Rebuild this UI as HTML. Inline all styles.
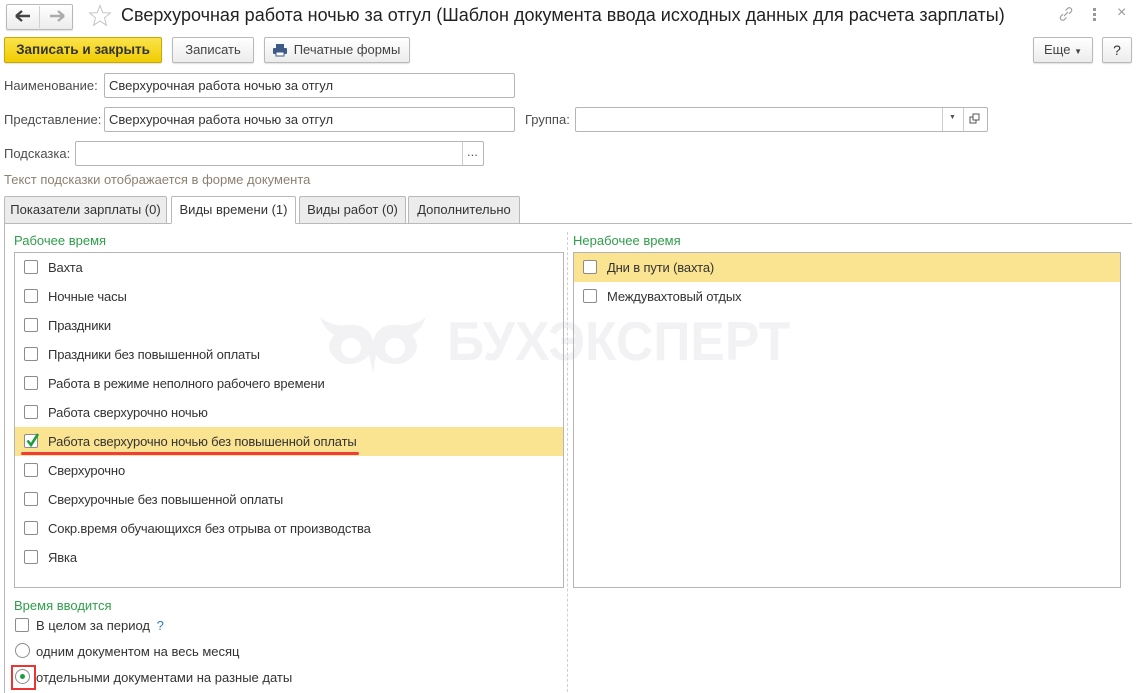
<!DOCTYPE html>
<html><head><meta charset="utf-8"><style>
*{box-sizing:border-box;margin:0;padding:0}
body{width:1136px;height:691px;background:#fff;font-family:"Liberation Sans",Arial,sans-serif;font-size:13px;color:#333;position:relative;overflow:hidden}
.a{position:absolute;white-space:nowrap}
.btn{position:absolute;border:1px solid #b9b9b9;border-radius:2px;background:linear-gradient(#fff,#ececec);box-shadow:0 1px 1px rgba(0,0,0,.12);text-align:center;line-height:24px;color:#444}
.inp{position:absolute;border:1px solid #b5b5b5;border-radius:2px;background:#fff;height:25px;line-height:23px;padding-left:4px;color:#333}
.lbl{position:absolute;color:#4d4d4d;white-space:nowrap}
.tab{position:absolute;top:196px;height:28px;border:1px solid #b9b9b9;background:#ececec;line-height:26px;text-align:center;color:#333;border-radius:2px 2px 0 0}
.green{color:#2e9e4a}
.cb{position:absolute;width:14px;height:14px;border:1px solid #8c8c8c;border-radius:2px;background:#fff}
.row{position:absolute;height:29px;line-height:30px}
.row .cb{left:9px;top:7px}
.row span{position:absolute;left:33px;color:#333;letter-spacing:-0.15px}
</style></head><body>
<div class="btn" style="left:6px;top:4px;width:67px;height:26px;"></div>
<div class="a" style="left:39px;top:6px;width:1px;height:22px;background:#d0d0d0"></div>
<svg class="a" style="left:14px;top:9px" width="18" height="14"><path d="M2 7H16M2 7L8 2M2 7L8 12" stroke="#444" stroke-width="2.4" fill="none"/></svg>
<svg class="a" style="left:48px;top:9px" width="18" height="14"><path d="M2 7H16M16 7L10 2M16 7L10 12" stroke="#aaa" stroke-width="2.4" fill="none"/></svg>
<svg class="a" style="left:88px;top:4px" width="24" height="23"><path d="M12 1.5L14.8 8.6 22.3 9 16.5 13.8 18.4 21.2 12 17 5.6 21.2 7.5 13.8 1.7 9 9.2 8.6Z" fill="none" stroke="#c4c4c4" stroke-width="1"/></svg>
<div class="a" style="left:121px;top:5px;font-size:18px;color:#222">Сверхурочная работа ночью за отгул (Шаблон документа ввода исходных данных для расчета зарплаты)</div>
<svg class="a" style="left:1058px;top:6px" width="16" height="16"><path d="M6 10L10 6M7.5 4.5l2-2a2.3 2.3 0 0 1 3.6 3.3l-2 2M8.5 11.5l-2 2a2.3 2.3 0 0 1-3.6-3.3l2-2" stroke="#999" stroke-width="1.1" fill="none"/></svg>
<div class="a" style="left:1093px;top:8px;width:3px;height:3px;background:#999;box-shadow:0 5px 0 #999,0 10px 0 #999"></div>
<div class="a" style="left:1117px;top:4px;color:#999;font-size:16px">×</div>
<div class="btn" style="left:4px;top:37px;width:158px;height:26px;background:linear-gradient(#fbe34c,#f0cc00);border-color:#c9a800;color:#333;font-weight:bold;font-size:13.5px">Записать и закрыть</div>
<div class="btn" style="left:172px;top:37px;width:82px;height:26px">Записать</div>
<div class="btn" style="left:264px;top:37px;width:146px;height:26px;padding-left:20px">Печатные формы</div>
<svg class="a" style="left:272px;top:43px" width="16" height="14"><rect x="4" y="1" width="8" height="4" fill="#3d5b87"/><rect x="1" y="5" width="14" height="6" rx="1" fill="#3d5b87"/><rect x="4" y="9" width="8" height="4" fill="#fff" stroke="#3d5b87"/></svg>
<div class="btn" style="left:1033px;top:37px;width:60px;height:26px">Еще <span style="font-size:8px">▼</span></div>
<div class="btn" style="left:1102px;top:37px;width:30px;height:26px;font-size:14px;color:#333">?</div>
<div class="lbl" style="left:4px;top:78px">Наименование:</div>
<div class="inp" style="left:104px;top:73px;width:411px">Сверхурочная работа ночью за отгул</div>
<div class="lbl" style="left:4px;top:112px">Представление:</div>
<div class="inp" style="left:104px;top:107px;width:411px">Сверхурочная работа ночью за отгул</div>
<div class="lbl" style="left:525px;top:112px">Группа:</div>
<div class="inp" style="left:575px;top:107px;width:413px"></div>
<div class="a" style="left:942px;top:108px;width:1px;height:23px;background:#ccc"></div>
<div class="a" style="left:963px;top:108px;width:1px;height:23px;background:#ccc"></div>
<div class="a" style="left:949px;top:114px;font-size:7px;color:#555">▼</div>
<svg class="a" style="left:969px;top:113px" width="12" height="12"><rect x="1" y="4" width="6" height="6" fill="none" stroke="#555"/><rect x="4" y="1" width="6" height="6" fill="#fff" stroke="#555"/></svg>
<div class="lbl" style="left:4px;top:146px">Подсказка:</div>
<div class="inp" style="left:75px;top:141px;width:409px"></div>
<div class="a" style="left:462px;top:142px;width:1px;height:23px;background:#ccc"></div>
<div class="a" style="left:467px;top:144px;color:#555">...</div>
<div class="a" style="left:4px;top:172px;color:#8d8071">Текст подсказки отображается в форме документа</div>
<div class="tab" style="left:4px;width:163px">Показатели зарплаты (0)</div>
<div class="tab" style="left:171px;width:125px;background:#fff;border-bottom-color:#fff;z-index:2">Виды времени (1)</div>
<div class="tab" style="left:299px;width:107px">Виды работ (0)</div>
<div class="tab" style="left:408px;width:112px">Дополнительно</div>
<div class="a" style="left:4px;top:223px;width:1128px;height:470px;border-left:1px solid #b9b9b9;border-top:1px solid #b9b9b9"></div>
<!-- watermark -->
<svg class="a" style="left:318px;top:315px" width="112" height="58"><path d="M2 2Q14 12 30 10Q50 8 55 26Q60 8 80 10Q96 12 108 2Q104 14 94 20Q104 32 94 42Q84 52 70 48Q62 46 58 40L55 58L51 40Q46 46 38 48Q24 52 16 42Q6 32 16 20Q6 14 2 2Z" fill="#f2f2f4"/><circle cx="33" cy="33" r="10" fill="#fff"/><circle cx="77" cy="33" r="10" fill="#fff"/></svg>
<div class="a" style="left:447px;top:309px;font-size:55px;font-weight:bold;color:#f2f2f4;transform:scaleX(0.94);transform-origin:0 0">БУХЭКСПЕРТ</div>
<div class="a green" style="left:14px;top:233px">Рабочее время</div>
<div class="a" style="left:567px;top:232px;height:460px;border-left:1px dashed #d0d0d0"></div>
<div class="a" style="left:14px;top:252px;width:550px;height:336px;border:1px solid #b5b5b5">
<div class="row" style="left:0;top:0;width:548px"><div class="cb"></div><span>Вахта</span></div>
<div class="row" style="left:0;top:29px;width:548px"><div class="cb"></div><span>Ночные часы</span></div>
<div class="row" style="left:0;top:58px;width:548px"><div class="cb"></div><span>Праздники</span></div>
<div class="row" style="left:0;top:87px;width:548px"><div class="cb"></div><span>Праздники без повышенной оплаты</span></div>
<div class="row" style="left:0;top:116px;width:548px"><div class="cb"></div><span>Работа в режиме неполного рабочего времени</span></div>
<div class="row" style="left:0;top:145px;width:548px"><div class="cb"></div><span>Работа сверхурочно ночью</span></div>
<div class="row" style="left:0;top:174px;width:548px;background:#fbe491"><div class="cb"></div><svg class="a" style="left:10px;top:5px" width="16" height="16"><path d="M2.5 8.5L6 13L13 2" stroke="#1d9d3c" stroke-width="2.6" fill="none"/></svg><span>Работа сверхурочно ночью без повышенной оплаты</span></div>
<div class="a" style="left:6px;top:199px;width:338px;height:3px;background:#f23c3c;border-radius:2px"></div>
<div class="row" style="left:0;top:203px;width:548px"><div class="cb"></div><span>Сверхурочно</span></div>
<div class="row" style="left:0;top:232px;width:548px"><div class="cb"></div><span>Сверхурочные без повышенной оплаты</span></div>
<div class="row" style="left:0;top:261px;width:548px"><div class="cb"></div><span>Сокр.время обучающихся без отрыва от производства</span></div>
<div class="row" style="left:0;top:290px;width:548px"><div class="cb"></div><span>Явка</span></div>
</div>
<div class="a green" style="left:573px;top:233px">Нерабочее время</div>
<div class="a" style="left:573px;top:252px;width:548px;height:336px;border:1px solid #b5b5b5">
<div class="row" style="left:0;top:0;width:546px;background:#fbe491"><div class="cb"></div><span>Дни в пути (вахта)</span></div>
<div class="row" style="left:0;top:29px;width:546px"><div class="cb"></div><span>Междувахтовый отдых</span></div>
</div>
<div class="a green" style="left:14px;top:598px">Время вводится</div>
<div class="cb" style="left:15px;top:618px"></div>
<div class="a" style="left:36px;top:618px">В целом за период <span style="color:#2a7bc0;margin-left:3px">?</span></div>
<div class="a" style="left:15px;top:643px;width:15px;height:15px;border:1px solid #8c8c8c;border-radius:50%"></div>
<div class="a" style="left:36px;top:644px">одним документом на весь месяц</div>
<div class="a" style="left:11px;top:665px;width:25px;height:25px;border:2px solid #e33"></div>
<div class="a" style="left:15px;top:669px;width:15px;height:15px;border:1px solid #8c8c8c;border-radius:50%"></div>
<div class="a" style="left:20px;top:674px;width:5px;height:5px;background:#1d9d3c;border-radius:50%"></div>
<div class="a" style="left:36px;top:670px">отдельными документами на разные даты</div>
</body></html>
